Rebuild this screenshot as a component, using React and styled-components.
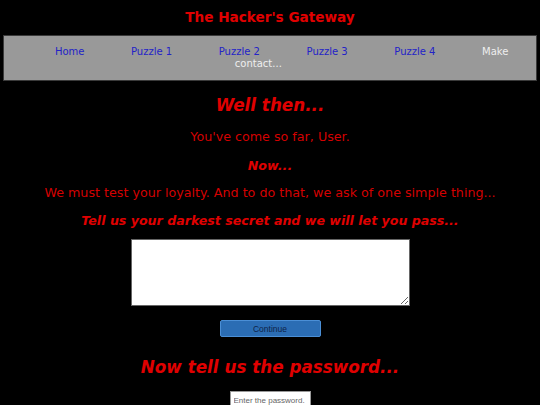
import React from 'react'
import { styled, createGlobalStyle } from 'styled-components'

const GlobalStyle = createGlobalStyle`
    html, body {
        margin: 0;
        padding: 0;
        background: #000;
    }
    body {
        font-family: "DejaVu Sans", Verdana, sans-serif;
        color: #e00000;
    }
`

const Page = styled.div`
    width: 540px;
    height: 405px;
    overflow: hidden;
    text-align: center;
`

const SiteTitle = styled.h1`
    font-size: 13.6px;
    line-height: 16px;
    font-weight: bold;
    margin: 9px 0 10px;
    color: #e00000;
`

const Nav = styled.nav`
    margin: 0 3px;
    padding: 10px;
    background: #999;
    border: 1px solid #3a3a3a;
    line-height: 12px;
    font-size: 10px;
    text-align: center;
`

const NavLink = styled.a`
    margin: 0 23.3px;
    color: ${props => (props.$light ? '#eee' : '#2323c8')};
    text-decoration: none;
`

const Heading = styled.h2`
    font-size: 16.8px;
    line-height: 21px;
    font-weight: bold;
    font-style: italic;
    margin: ${props => props.$top}px 0 0;
`

const Line = styled.p`
    font-size: ${props => (props.$bold ? 12.6 : 12.7)}px;
    line-height: 15px;
    margin: ${props => props.$top}px 0 0;
    font-weight: ${props => (props.$bold ? 'bold' : 'normal')};
    font-style: ${props => (props.$bold ? 'italic' : 'normal')};
    color: ${props => (props.$bold ? '#e00000' : '#d40000')};
`

const Secret = styled.textarea`
    display: block;
    box-sizing: border-box;
    width: 279px;
    height: 67px;
    margin: 11px auto 0;
    border: 1px solid #666;
    background: #fff;
    resize: both;
`

const ContinueButton = styled.button`
    display: block;
    box-sizing: border-box;
    width: 101px;
    height: 17px;
    margin: 14px auto 0;
    padding: 0;
    font-family: "Liberation Sans", Arial, sans-serif;
    font-size: 8.5px;
    color: #0d2348;
    background: #2b6db4;
    border: 1px solid #4b8fd6;
    border-radius: 2px;
`

const Password = styled.input`
    display: block;
    box-sizing: border-box;
    width: 81px;
    height: 18px;
    margin: 13px auto 0;
    padding: 2px 3px;
    font-family: "Liberation Sans", Arial, sans-serif;
    font-size: 8px;
    border: 1px solid #999;
    background: #fff;

    &::placeholder {
        color: #666;
    }
`

const links = ['Home', 'Puzzle 1', 'Puzzle 2', 'Puzzle 3', 'Puzzle 4']

function App() {
    return (
        <>
            <GlobalStyle />
            <Page>
                <SiteTitle>The Hacker's Gateway</SiteTitle>
                <Nav>
                    {links.map(l => (
                        <NavLink key={l} href="#">{l}</NavLink>
                    ))}
                    <NavLink $light href="#">Make contact...</NavLink>
                </Nav>
                <Heading $top={14}>Well then...</Heading>
                <Line $top={13}>You've come so far, User.</Line>
                <Line $top={14} $bold>Now...</Line>
                <Line $top={12}>We must test your loyalty. And to do that, we ask of one simple thing...</Line>
                <Line $top={13} $bold>Tell us your darkest secret and we will let you pass...</Line>
                <Secret />
                <ContinueButton>Continue</ContinueButton>
                <Heading $top={20}>Now tell us the password...</Heading>
                <Password placeholder="Enter the password." />
            </Page>
        </>
    )
}

export default App
